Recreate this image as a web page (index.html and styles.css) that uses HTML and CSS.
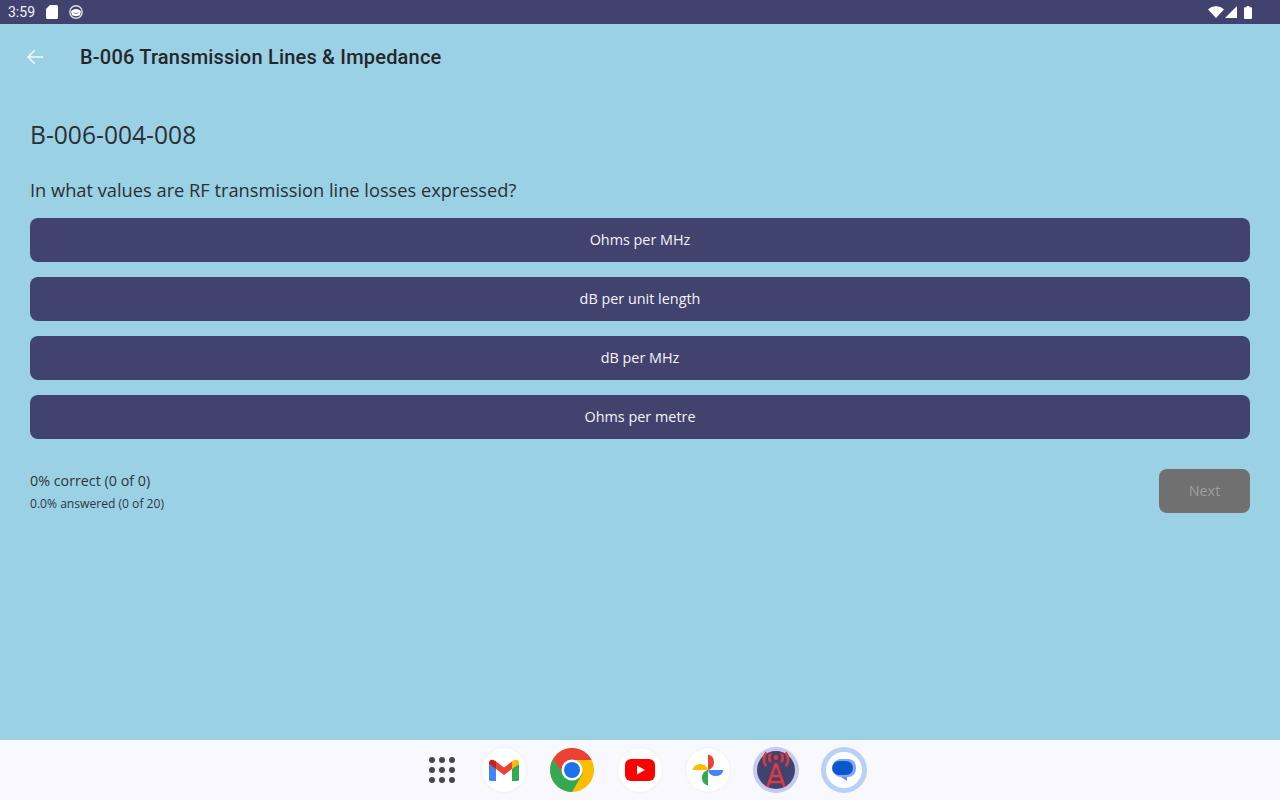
FILE: index.html
```html
<!DOCTYPE html>
<html lang="en">
<head>
    <meta charset="UTF-8">
    <title>B-006 Transmission Lines &amp; Impedance</title>
    <link rel="stylesheet" href="styles.css">
</head>
<body>
    <div class="screen">
        <div class="status-bar">
            <span class="clock">3:59</span>
            <svg class="sd-icon" width="12" height="14" viewBox="0 0 12 14"><path d="M4 0H10.500A1.500 1.500 0 0 1 12 1.500V12.500A1.500 1.500 0 0 1 10.500 14H1.500A1.500 1.500 0 0 1 0 12.500V4Z" fill="#fff"/></svg>
            <svg class="face-icon" width="14" height="14" viewBox="0 0 14 14"><circle cx="7" cy="7" r="6.200" fill="none" stroke="#dcdce6" stroke-width="1.400"/><path d="M2 6.500C3.500 3 10.500 3 12 6.500L11 10C9.500 11.500 4.500 11.500 3 10Z" fill="#fff"/><path d="M4.500 7.500C5.500 8.800 8.500 8.800 9.500 7.500" stroke="#8a8aa5" stroke-width="1" fill="none"/></svg>
            <span class="spacer"></span>
            <svg class="wifi-icon" width="16" height="12" viewBox="0 0 16 12"><path d="M0 3.500C4.500 -0.800 11.500 -0.800 16 3.500L8 12Z" fill="#fff"/></svg>
            <svg class="signal-icon" width="12" height="12" viewBox="0 0 12 12"><path d="M12 0V12H0Z" fill="#fff"/></svg>
            <svg class="battery-icon" width="8" height="13" viewBox="0 0 8 13"><path d="M2.500 0H5.500V1.200H7A1 1 0 0 1 8 2.200V12A1 1 0 0 1 7 13H1A1 1 0 0 1 0 12V2.200A1 1 0 0 1 1 1.200H2.500Z" fill="#fff"/></svg>
        </div>

        <header class="app-bar">
            <svg class="back-icon" width="18" height="16" viewBox="0 0 18 16"><path d="M17 8H2M8.500 1.500L2 8L8.500 14.500" fill="none" stroke="#f2f9fc" stroke-width="1.700"/></svg>
            <h1 class="app-title">B-006 Transmission Lines &amp; Impedance</h1>
        </header>

        <main class="content">
            <h2 class="question-id">B-006-004-008</h2>
            <p class="question">In what values are RF transmission line losses expressed?</p>
            <div class="answers">
                <button class="answer">Ohms per MHz</button>
                <button class="answer">dB per unit length</button>
                <button class="answer">dB per MHz</button>
                <button class="answer">Ohms per metre</button>
            </div>
            <div class="progress-row">
                <div>
                    <div class="score">0% correct (0 of 0)</div>
                    <div class="answered">0.0% answered (0 of 20)</div>
                </div>
                <button class="next" disabled>Next</button>
            </div>
        </main>

        <footer class="dock">
            <div class="all-apps">
                <i></i><i></i><i></i><i></i><i></i><i></i><i></i><i></i><i></i>
            </div>

            <div class="app-icon white">
                <svg width="30" height="22" viewBox="0 0 30 22">
                    <path d="M0 5V20.500A1.500 1.500 0 0 0 1.500 22H7V9Z" fill="#4285f4"/>
                    <path d="M23 9V22H28.500A1.500 1.500 0 0 0 30 20.500V5Z" fill="#34a853"/>
                    <path d="M7 2.500L15 8.500L23 2.500V10L15 16L7 10Z" fill="#ea4335"/>
                    <path d="M0 3.500C0 0.500 4 -0.500 7 2.500V10L0 5Z" fill="#c5221f"/>
                    <path d="M30 3.500C30 0.500 26 -0.500 23 2.500V10L30 5Z" fill="#fbbc04"/>
                </svg>
            </div>

            <div class="app-icon">
                <svg width="44" height="44" viewBox="0 0 44 44">
                    <circle cx="22" cy="22" r="22" fill="#fbbc04"/>
                    <path d="M22 22L3 11A22 22 0 0 0 22 44L33 25Z" fill="#34a853"/>
                    <path d="M3 11A22 22 0 0 1 41.700 12H22L14 27Z" fill="#ea4335"/>
                    <circle cx="22" cy="22" r="10.500" fill="#fff"/>
                    <circle cx="22" cy="22" r="8" fill="#1a73e8"/>
                </svg>
            </div>

            <div class="app-icon white">
                <svg width="30" height="22" viewBox="0 0 30 22">
                    <rect width="30" height="22" rx="6" fill="#f00"/>
                    <path d="M12 6.500L20 11L12 15.500Z" fill="#fff"/>
                </svg>
            </div>

            <div class="app-icon white">
                <svg width="32" height="32" viewBox="0 0 32 32">
                    <path d="M16 16V0.500A8 8 0 0 1 16 16Z" fill="#ea4335"/>
                    <path d="M16 16H31.500A8 8 0 0 1 16 16Z" fill="#4285f4"/>
                    <path d="M16 16V31.500A8 8 0 0 1 16 16Z" fill="#34a853"/>
                    <path d="M16 16H0.500A8 8 0 0 1 16 16Z" fill="#fbbc04"/>
                </svg>
            </div>

            <div class="app-icon ring-lilac">
                <svg width="38" height="38" viewBox="0 0 38 38">
                    <circle cx="19" cy="19" r="19" fill="#42426f"/>
                    <g fill="none" stroke="#dc3a3c" stroke-width="2.600">
                        <path d="M19 12L10.500 36M19 12L27.500 36M14 25H24M12 31H26"/>
                        <path d="M14 11A6 6 0 0 1 14 2.500M24 11A6 6 0 0 0 24 2.500"/>
                        <path d="M9.500 15A10 10 0 0 1 9.500 1.500M28.500 15A10 10 0 0 0 28.500 1.500"/>
                    </g>
                    <circle cx="19" cy="6.500" r="2.400" fill="#dc3a3c"/>
                </svg>
            </div>

            <div class="app-icon ring-blue">
                <svg width="24" height="24" viewBox="0 0 24 24">
                    <path d="M8 17H15V23L9 19Z" fill="#5a93f2"/>
                    <rect x="1" y="1" width="23" height="18" rx="8" fill="#7fa9f5"/>
                    <rect x="0" y="3" width="21" height="14" rx="7" fill="#0b57d0"/>
                </svg>
            </div>
        </footer>
    </div>
</body>
</html>
```

FILE: styles.css
```css
* {
    box-sizing: border-box;
}
body {
    margin: 0;
    font-family: "Open Sans", sans-serif;
    background-color: #9ad1e5;
}
.screen {
    width: 1280px;
    height: 800px;
    display: flex;
    flex-direction: column;
    overflow: hidden;
}
.status-bar {
    height: 24px;
    flex: none;
    background-color: #42426f;
    color: #fff;
    display: flex;
    align-items: center;
    padding: 0 28px 0 8px;
}
.clock {
    font-family: Roboto, sans-serif;
    font-size: 14px;
    color: #f2f2f6;
}
.sd-icon {
    margin-left: 11px;
}
.face-icon {
    margin-left: 11px;
}
.spacer {
    flex: 1;
}
.signal-icon {
    margin-left: 1px;
}
.battery-icon {
    margin-left: 7px;
}
.app-bar {
    height: 66px;
    flex: none;
    display: flex;
    align-items: center;
    padding: 0 0 0 26px;
}
.back-icon {
    margin-top: -1px;
}
.app-title {
    margin: 0 0 0 36px;
    font-family: Roboto, sans-serif;
    font-size: 20px;
    font-weight: 500;
    letter-spacing: 0.2px;
    color: #26262a;
}
.content {
    flex: 1;
    padding: 28px 30px 0;
}
.question-id {
    margin: 0;
    font-size: 24.600px;
    line-height: 34px;
    font-weight: 400;
    color: #2a2f34;
}
.question {
    margin: 26px 0 0;
    font-size: 18.250px;
    line-height: 24px;
    color: #2a2f34;
}
.answers {
    margin-top: 16px;
    display: flex;
    flex-direction: column;
    gap: 15px;
}
.answer {
    height: 44px;
    border: none;
    border-radius: 8px;
    background-color: #42426f;
    color: #f4f4f8;
    font-family: "Open Sans", sans-serif;
    font-size: 14.400px;
    padding: 0 0 1px;
}
.progress-row {
    margin-top: 30px;
    display: flex;
    justify-content: space-between;
    align-items: flex-start;
}
.score {
    font-size: 14.300px;
    line-height: 24px;
    color: #30363c;
}
.answered {
    font-size: 12.100px;
    line-height: 22px;
    color: #30363c;
}
.next {
    width: 91px;
    height: 44px;
    border: none;
    border-radius: 8px;
    background-color: #707070;
    color: #9e9e9e;
    font-family: "Open Sans", sans-serif;
    font-size: 14.400px;
    padding: 0 0 1px;
}
.dock {
    height: 60px;
    flex: none;
    background-color: #f9f8fe;
    display: flex;
    justify-content: center;
    align-items: center;
    padding-left: 26px;
}
.all-apps {
    width: 26px;
    margin-right: 15px;
    display: grid;
    grid-template-columns: repeat(3, 6px);
    gap: 4px;
}
.all-apps i {
    width: 6px;
    height: 6px;
    border-radius: 50%;
    background-color: #45464f;
}
.app-icon {
    width: 44px;
    height: 44px;
    margin: 0 12px;
    border-radius: 50%;
    display: flex;
    align-items: center;
    justify-content: center;
    flex: none;
}
.white {
    background-color: #fff;
    box-shadow: 0 0 2px #e2e2ea;
}
.ring-lilac {
    width: 46px;
    height: 46px;
    margin: 0 11px;
    background-color: #c5caf0;
}
.ring-blue {
    width: 46px;
    height: 46px;
    margin: 0 11px;
    background-color: #fff;
    border: 5px solid #b9d0f7;
}
```
